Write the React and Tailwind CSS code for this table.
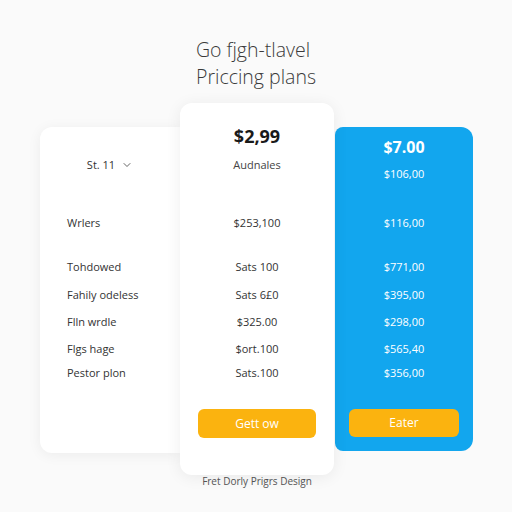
import { ChevronDown } from "lucide-react";

const labels = ["Wrlers", "Tohdowed", "Fahily odeless", "Flln wrdle", "Flgs hage", "Pestor plon"];
const midVals = ["$253,100", "Sats 100", "Sats 6£0", "$325.00", "$ort.100", "Sats.100"];
const blueVals = ["$116,00", "$771,00", "$395,00", "$298,00", "$565,40", "$356,00"];
const gaps = ["mt-[24px]", "mt-[8px]", "mt-[7px]", "mt-[7px]", "mt-[4px]"];

const Rows = ({ items, first, className }) => (
  <div className={first}>
    {items.map((t, i) => (
      <div key={i} className={`h-[20px] flex items-center ${i > 0 ? gaps[i - 1] : ""} ${className}`}>
        {t}
      </div>
    ))}
  </div>
);

export default function App() {
  return (
    <div
      className="w-[512px] h-[512px] bg-[#fafafa] overflow-hidden text-[#2f2f2f]"
      style={{ fontFamily: "'Open Sans', 'Liberation Sans', sans-serif" }}
    >
      <div className="pt-[36px] pl-[196px] text-[19.5px] leading-[27px] font-light text-[#3a3a3a]" style={{ fontFamily: "'Open Sans', Lato, sans-serif" }}>
        <div>Go fjgh-tlavel</div>
        <div>Priccing plans</div>
      </div>

      <div className="flex items-start mt-[13px] pl-[40px]">
        <div className="w-[140px] h-[326px] mt-[24px] bg-white rounded-l-xl shadow-[0_2px_14px_rgba(0,0,0,0.06)] pt-[28px]">
          <div className="h-[20px] flex items-center justify-center gap-1.5 text-[11px] text-[#333]">
            <span>St. 11</span>
            <ChevronDown size={12} strokeWidth={1.5} />
          </div>
          <Rows items={labels} first="mt-[38px] pl-[27px]" className="text-[11px] text-[#333]" />
        </div>

        <div className="relative z-10 w-[154px] h-[372px] bg-white rounded-xl shadow-[0_2px_16px_rgba(0,0,0,0.07)] pt-[21px] flex flex-col items-center">
          <div className="h-6 flex items-center text-[18px] font-bold text-[#1a1a1a]">$2,99</div>
          <div className="h-[20px] mt-[7px] flex items-center text-[11px] text-[#444]">Audnales</div>
          <Rows items={midVals} first="mt-[38px] flex flex-col items-center" className="text-[11px] text-[#333]" />
          <div className="mt-[26px] w-[118px] h-[29px] rounded-md bg-[#fbb30f] flex items-center justify-center text-[12px] text-white">
            Gett ow
          </div>
        </div>

        <div className="w-[138px] h-[324px] mt-[24px] ml-[1px] bg-[#12a6ee] rounded-r-xl rounded-l-lg pt-[8px] flex flex-col items-center text-white">
          <div className="h-6 flex items-center text-[16px] font-bold">$7.00</div>
          <div className="h-[20px] mt-[5px] flex items-center text-[11px]">$106,00</div>
          <Rows items={blueVals} first="mt-[29px] flex flex-col items-center" className="text-[11px]" />
          <div className="mt-[26px] w-[110px] h-[28px] rounded-md bg-[#fbb30f] flex items-center justify-center text-[12px]">
            Eater
          </div>
        </div>
      </div>

      <div className="ml-[180px] w-[154px] text-center text-[10px] leading-[12px] text-[#555]">Fret Dorly Prigrs Design</div>
    </div>
  );
}
